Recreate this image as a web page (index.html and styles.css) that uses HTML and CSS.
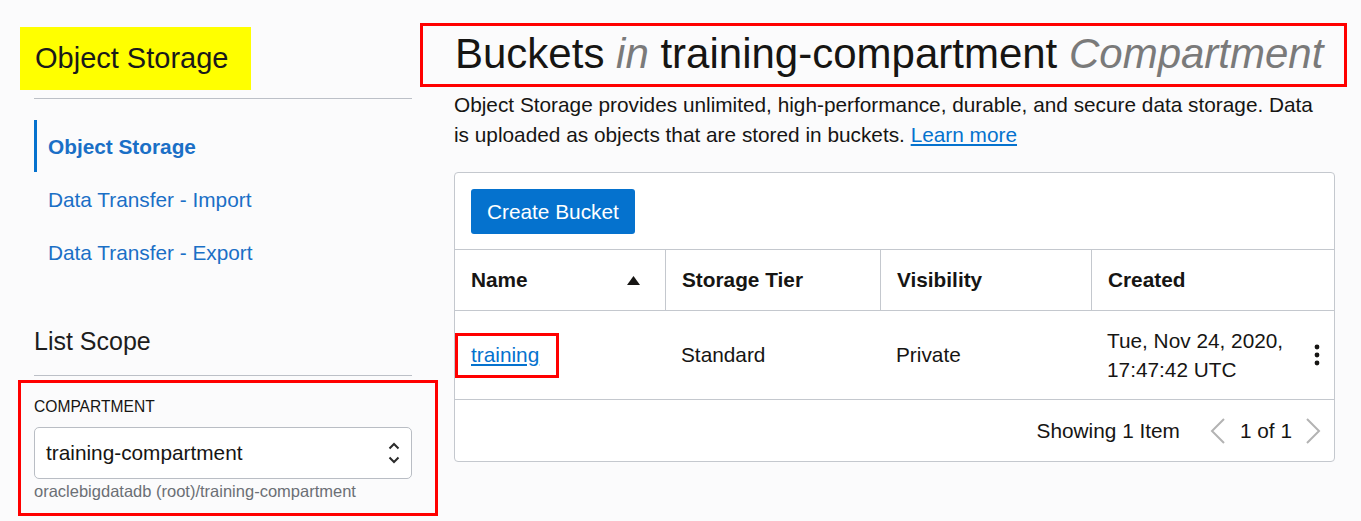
FILE: index.html
```html
<!DOCTYPE html>
<html lang="en">
<head>
<meta charset="utf-8">
<title>Object Storage</title>
<link rel="stylesheet" href="styles.css">
</head>
<body>
<div class="page">
  <aside class="sidebar">
    <div class="title-wrap"><span class="title">Object Storage</span></div>
    <div class="divider"></div>
    <ul class="nav">
      <li class="nav-item active">Object Storage</li>
      <li class="nav-item">Data Transfer - Import</li>
      <li class="nav-item">Data Transfer - Export</li>
    </ul>
    <h2 class="scope-title">List Scope</h2>
    <div class="divider divider-scope"></div>
    <div class="scope-box">
      <div class="field-label">COMPARTMENT</div>
      <div class="select">
        <span class="select-value">training-compartment</span>
        <svg class="select-icon" width="12" height="22" viewBox="0 0 12 22"><polyline points="1.5,6.5 6,2 10.5,6.5" fill="none" stroke="#2b2b2b" stroke-width="2"/><polyline points="1.5,15.5 6,20 10.5,15.5" fill="none" stroke="#2b2b2b" stroke-width="2"/></svg>
      </div>
      <div class="helper">oraclebigdatadb (root)/training-compartment</div>
    </div>
  </aside>
  <main class="main">
    <div class="heading-wrap">
      <h1 class="heading">Buckets <em class="muted">in</em> training-compartment <em class="muted">Compartment</em></h1>
    </div>
    <p class="intro">Object Storage provides unlimited, high-performance, durable, and secure data storage. Data is uploaded as objects that are stored in buckets. <a class="link" href="#">Learn more</a></p>
    <div class="card">
      <div class="toolbar"><button class="btn">Create Bucket</button></div>
      <div class="table">
        <div class="row head">
          <div class="cell c1 name-head"><span>Name</span><svg width="13" height="9" viewBox="0 0 13 9"><polygon points="6.5,0 13,9 0,9" fill="#161513"/></svg></div>
          <div class="cell c2">Storage Tier</div>
          <div class="cell c3">Visibility</div>
          <div class="cell c4">Created</div>
        </div>
        <div class="row body">
          <div class="cell c1"><span class="mark"><a class="link" href="#">training</a></span></div>
          <div class="cell c2">Standard</div>
          <div class="cell c3">Private</div>
          <div class="cell c4 created"><span>Tue, Nov 24, 2020,<br>17:47:42 UTC</span><svg class="kebab" width="6" height="22" viewBox="0 0 6 22"><circle cx="3" cy="3" r="2.4" fill="#161513"/><circle cx="3" cy="11" r="2.4" fill="#161513"/><circle cx="3" cy="19" r="2.4" fill="#161513"/></svg></div>
        </div>
      </div>
      <div class="footer">
        <span class="count">Showing 1 Item</span>
        <svg class="chev" width="16" height="26" viewBox="0 0 16 26"><polyline points="14,1 2,13 14,25" fill="none" stroke="#b3b3b3" stroke-width="2"/></svg>
        <span class="pages">1 of 1</span>
        <svg class="chev" width="16" height="26" viewBox="0 0 16 26"><polyline points="2,1 14,13 2,25" fill="none" stroke="#b3b3b3" stroke-width="2"/></svg>
      </div>
    </div>
  </main>
</div>
</body>
</html>
```
FILE: styles.css
```css
* { box-sizing: border-box; }
body {
  margin: 0;
  background: #fbfbfc;
  font-family: "Liberation Sans", Arial, sans-serif;
  color: #161513;
}
.page {
  display: flex;
  gap: 42px;
  padding-left: 34px;
}
.sidebar {
  width: 378px;
  flex: none;
}
.title-wrap {
  padding-top: 27px;
  margin-left: -14px;
}
.title {
  display: inline-block;
  background: #ffff00;
  height: 63px;
  line-height: 63px;
  padding: 0 23px 0 15px;
  font-size: 29px;
  color: #1a1a1a;
}
.divider {
  margin-top: 8px;
  border-top: 1px solid #bcc0c7;
}
.nav {
  list-style: none;
  margin: 21px 0 0;
  padding: 0;
}
.nav-item {
  height: 53px;
  display: flex;
  align-items: center;
  padding-left: 14px;
  font-size: 20.8px;
  color: #1a6fc6;
}
.nav-item.active {
  border-left: 3px solid #0572ce;
  padding-left: 11px;
  font-weight: bold;
  height: 52px;
  margin-bottom: 1px;
  padding-top: 2px;
}
.scope-title {
  margin: 47px 0 0;
  font-size: 25px;
  font-weight: normal;
  line-height: 30px;
  color: #1d1d1d;
}
.divider-scope {
  margin-top: 19px;
}
.scope-box {
  margin: 4px -26px 0 -16px;
  border: 3px solid #ff0000;
  padding: 15px 23px 12px 13px;
}
.field-label {
  font-size: 15.6px;
  line-height: 18px;
  color: #161513;
}
.select {
  margin-top: 11px;
  height: 52px;
  border: 1px solid #b9bdc4;
  border-radius: 5px;
  background: #fff;
  display: flex;
  align-items: center;
  justify-content: space-between;
  padding: 0 11px 0 11px;
  font-size: 20.8px;
}
.helper {
  margin-top: 2px;
  font-size: 16.5px;
  line-height: 20px;
  color: #6b6f75;
}
.main {
  width: 881px;
  flex: none;
}
.heading-wrap {
  padding-top: 23px;
}
.heading {
  display: inline-block;
  margin: 0 0 0 -34px;
  border: 3px solid #ff0000;
  padding: 0 21px 0 32px;
  height: 64px;
  line-height: 56px;
  font-size: 42px;
  font-weight: normal;
  color: #161513;
  white-space: nowrap;
}
.muted {
  color: #7a7a7a;
}
.intro {
  margin: 3px 0 0;
  max-width: 872px;
  font-size: 20.8px;
  line-height: 29.5px;
}
.link {
  color: #0572ce;
  text-decoration: underline;
}
.card {
  margin-top: 23px;
  background: #fff;
  border: 1px solid #c4c8ce;
  border-radius: 4px;
}
.toolbar {
  padding: 16px 16px 15px;
}
.btn {
  display: block;
  height: 45px;
  padding: 0 16px;
  border: none;
  border-radius: 3px;
  background: #0572ce;
  color: #fff;
  font-family: inherit;
  font-size: 20.8px;
}
.row {
  display: flex;
  border-top: 1px solid #c4c8ce;
}
.row.head {
  height: 61px;
  font-weight: bold;
}
.row.body {
  height: 89px;
}
.cell {
  display: flex;
  align-items: center;
  padding-left: 16px;
  font-size: 20.8px;
}
.head .cell + .cell {
  border-left: 1px solid #c4c8ce;
}
.c1 { width: 210px; }
.c2 { width: 215px; }
.c3 { width: 211px; }
.c4 { width: 243px; }
.name-head {
  justify-content: space-between;
  padding-right: 25px;
}
.mark {
  margin-left: -16px;
  border: 3px solid #ff0000;
  height: 45px;
  display: flex;
  align-items: center;
  padding: 0 17px 0 13px;
}
.created {
  justify-content: space-between;
  padding-right: 14px;
  line-height: 29px;
}
.footer {
  height: 62px;
  border-top: 1px solid #c4c8ce;
  display: flex;
  align-items: center;
  justify-content: flex-end;
  padding-right: 13px;
  font-size: 20.8px;
}
.count {
  margin-right: 30px;
}
.pages {
  margin: 0 13px 0 14px;
}
```
